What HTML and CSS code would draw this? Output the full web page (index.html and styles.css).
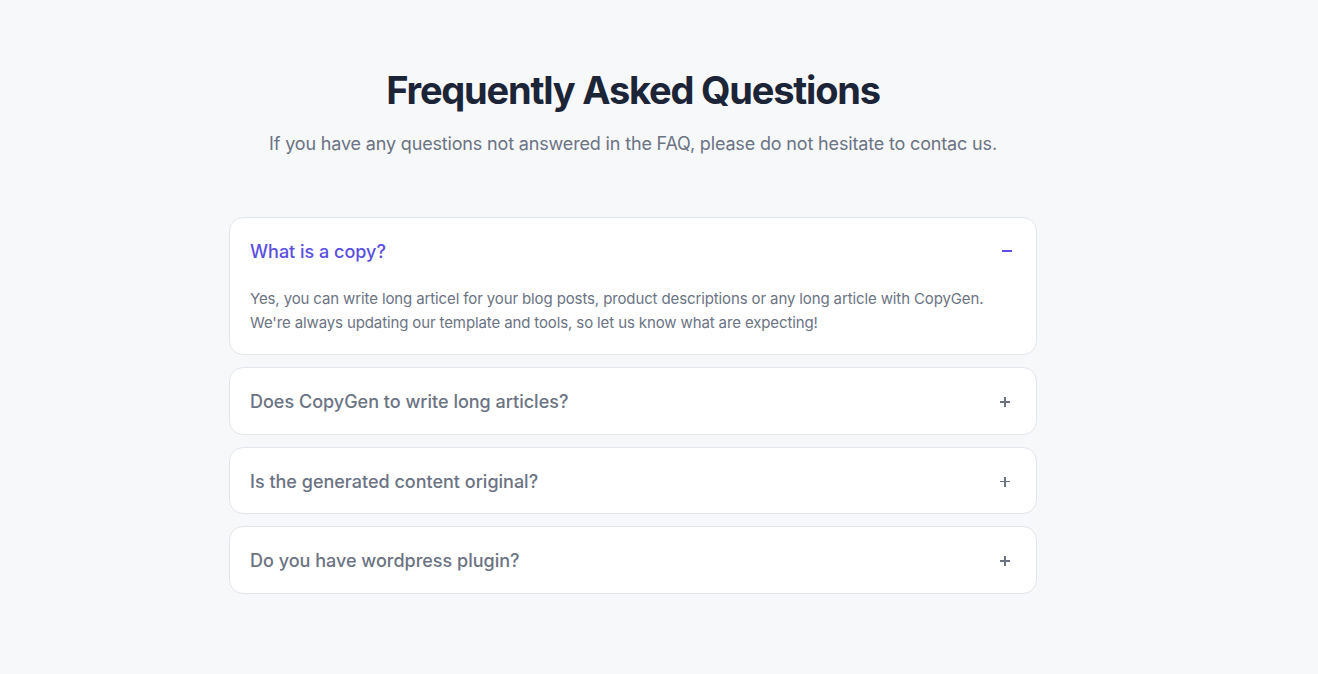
FILE: index.html
```html
<!DOCTYPE html>
<html lang="en">
<head>
<meta charset="utf-8">
<title>FAQ</title>
<link rel="stylesheet" href="styles.css">
</head>
<body>
<section class="faq">
  <div class="faq-head">
    <h1 class="faq-title">Frequently Asked Questions</h1>
    <p class="faq-sub">If you have any questions not answered in the FAQ, please do not hesitate to contac us.</p>
  </div>
  <div class="faq-list">
    <div class="faq-item open">
      <div class="faq-q">
        <span class="q-text">What is a copy?</span>
        <span class="q-icon minus"></span>
      </div>
      <p class="faq-a">Yes, you can write long articel for your blog posts, product descriptions or any long article with CopyGen.<br>We're always updating our template and tools, so let us know what are expecting!</p>
    </div>
    <div class="faq-item">
      <div class="faq-q">
        <span class="q-text">Does CopyGen to write long articles?</span>
        <span class="q-icon plus"></span>
      </div>
    </div>
    <div class="faq-item">
      <div class="faq-q">
        <span class="q-text">Is the generated content original?</span>
        <span class="q-icon plus"></span>
      </div>
    </div>
    <div class="faq-item">
      <div class="faq-q">
        <span class="q-text">Do you have wordpress plugin?</span>
        <span class="q-icon plus"></span>
      </div>
    </div>
  </div>
</section>
</body>
</html>
```
FILE: styles.css
```css
* { box-sizing: border-box; }
html, body { margin: 0; padding: 0; }
body {
  background: #f7f8fa;
  font-family: Inter, "Liberation Sans", sans-serif;
  width: 1318px;
  height: 674px;
  overflow: hidden;
}
.faq {
  width: 1266px;
  padding-top: 64px;
  display: flex;
  flex-direction: column;
  align-items: center;
}
.faq-head { text-align: center; }
.faq-title {
  margin: 0;
  font-size: 38px;
  line-height: 52px;
  font-weight: 700;
  color: #1c2437;
  letter-spacing: -1.2px;
}
.faq-sub {
  margin: 15px 0 0;
  font-size: 18px;
  line-height: 26px;
  color: #6b7384;
  letter-spacing: -0.16px;
}
.faq-list {
  width: 808px;
  margin-top: 60px;
  display: flex;
  flex-direction: column;
  gap: 12px;
}
.faq-item {
  background: #fff;
  border: 1px solid #e1e5ee;
  border-radius: 14px;
  padding: 21px 20px 18.5px;
}
.faq-item.open { padding-bottom: 19px; }
.faq-q {
  display: flex;
  align-items: center;
  justify-content: space-between;
  height: 26px;
}
.q-text {
  font-size: 18px;
  line-height: 26px;
  color: #6b7384;
  font-weight: 500;
}
.open .q-text { color: #5a4fe0; }
.q-icon {
  position: relative;
  width: 10px;
  height: 10px;
  margin-right: 6px;
}
.q-icon::before, .plus::after {
  content: "";
  position: absolute;
  background: #6b7384;
}
.q-icon::before { left: 0; right: 0; top: 4px; height: 1.5px; }
.plus::after { top: 0; bottom: 0; left: 4px; width: 1.5px; }
.minus::before { background: #5a4fe0; top: 3px; }
.minus { margin-right: 4px; }
.faq-a {
  margin: 22px 0 0;
  font-size: 15px;
  line-height: 24px;
  color: #6b7384;
  letter-spacing: -0.12px;
}
```
